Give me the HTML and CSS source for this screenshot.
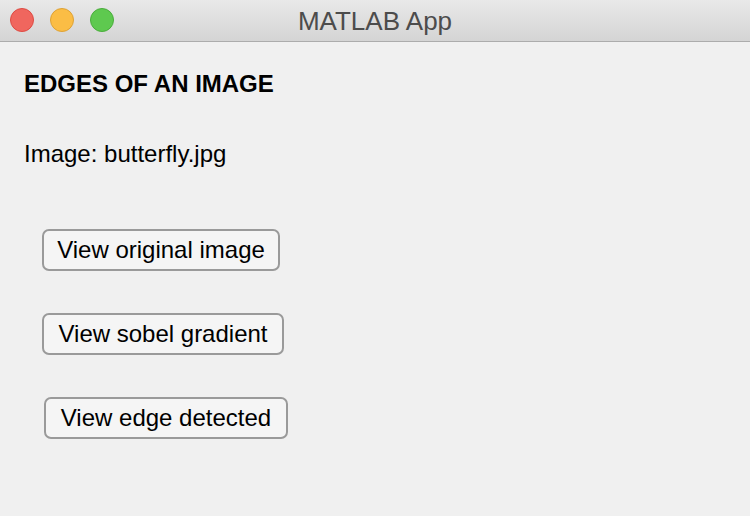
FILE: index.html
```html
<!DOCTYPE html>
<html>
<head>
<meta charset="utf-8">
<link rel="stylesheet" href="styles.css">
</head>
<body>
<div class="window">
  <div class="titlebar">
    <div class="lights">
      <span class="light red"></span>
      <span class="light yellow"></span>
      <span class="light green"></span>
    </div>
    <div class="title">MATLAB App</div>
  </div>
  <div class="content">
    <div class="heading">EDGES OF AN IMAGE</div>
    <div class="label">Image: butterfly.jpg</div>
    <div class="buttons">
      <button class="btn b1">View original image</button>
      <button class="btn b2">View sobel gradient</button>
      <button class="btn b3">View edge detected</button>
    </div>
  </div>
</div>
</body>
</html>
```
FILE: styles.css
```css
html, body {
  margin: 0;
  padding: 0;
  width: 750px;
  height: 516px;
  overflow: hidden;
  background: #f0f0f0;
  font-family: "Liberation Sans", Arial, sans-serif;
}
.window {
  width: 750px;
  height: 516px;
  display: flex;
  flex-direction: column;
}
.titlebar {
  height: 41px;
  flex: none;
  position: relative;
  background: linear-gradient(#e9e9e9, #d4d4d4);
  border-bottom: 1px solid #acacac;
  display: flex;
  align-items: center;
  justify-content: center;
}
.lights {
  position: absolute;
  left: 10px;
  top: 8px;
  display: flex;
  gap: 16px;
}
.light {
  width: 24px;
  height: 24px;
  border-radius: 50%;
  box-sizing: border-box;
}
.red { background: #f0665e; border: 1px solid #de4b43; }
.yellow { background: #fbbd45; border: 1px solid #dea235; }
.green { background: #5ec94f; border: 1px solid #4aad3c; }
.title {
  font-size: 26px;
  line-height: 30px;
  color: #4c4c4c;
}
.content {
  padding: 0 0 0 24px;
  display: flex;
  flex-direction: column;
}
.heading {
  margin-top: 28px;
  font-weight: bold;
  font-size: 24px;
  line-height: 28px;
  color: #000;
}
.label {
  margin-top: 42px;
  font-size: 24px;
  line-height: 28px;
  color: #000;
}
.buttons {
  margin-top: 61px;
  display: flex;
  flex-direction: column;
  align-items: flex-start;
  gap: 42px;
}
.btn {
  height: 42px;
  box-sizing: border-box;
  border: 2px solid #9a9a9a;
  border-radius: 7px;
  background: #f5f5f5;
  font-family: "Liberation Sans", Arial, sans-serif;
  font-size: 24px;
  color: #000;
  padding: 0;
  text-align: center;
}
.b1 { margin-left: 18px; width: 238px; }
.b2 { margin-left: 18px; width: 242px; }
.b3 { margin-left: 20px; width: 244px; }
```
